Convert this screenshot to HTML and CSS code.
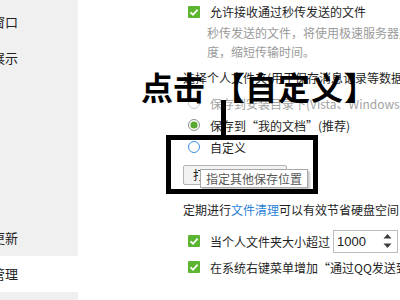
FILE: index.html
```html
<!DOCTYPE html>
<html lang="zh-CN">
<head>
<meta charset="utf-8">
<link rel="stylesheet" href="styles.css">
</head>
<body>
<div class="app">
  <nav class="sidebar">
    <div class="nav-item">会话窗口</div>
    <div class="nav-item">信息展示</div>
    <div class="nav-item">上线</div>
    <div class="nav-item">热键</div>
    <div class="nav-item">声音</div>
    <div class="nav-item">提醒</div>
    <div class="nav-item">软件更新</div>
    <div class="nav-item active">文件管理</div>
    <div class="nav-item">音视频通话</div>
  </nav>
  <main class="main">
    <div class="opt row-first">
      <svg class="check" width="12" height="12" viewBox="0 0 12 12"><rect width="12" height="12" rx="1" fill="#5cb531"/><path d="M2.5 6.3 L5 8.7 L9.6 3.6" fill="none" stroke="#fff" stroke-width="1.7"/></svg>
      <span>允许接收通过秒传发送的文件</span>
    </div>
    <div class="desc">
      <span>秒传发送的文件，将使用极速服务器加速上传，提高传输速</span>
      <span>度，缩短传输时间。</span>
    </div>
    <div class="heading">选择个人文件夹(用于保存消息记录等数据)</div>
    <div class="radios">
      <div class="opt disabled">
        <svg class="radio" width="12" height="12" viewBox="0 0 12 12"><circle cx="6" cy="6" r="5.5" fill="#fff" stroke="#c8c8c8"/></svg>
        <span>保存到安装目录下(Vista、Windows 7下保存到软件目录)</span>
      </div>
      <div class="opt">
        <svg class="radio" width="12" height="12" viewBox="0 0 12 12"><circle cx="6" cy="6" r="5.5" fill="#fff" stroke="#8f8f8f"/><circle cx="6" cy="6" r="3.6" fill="#5aa832"/></svg>
        <span>保存到“我的文档”(推荐)</span>
      </div>
      <div class="opt">
        <svg class="radio" width="12" height="12" viewBox="0 0 12 12"><circle cx="6" cy="6" r="5.5" fill="#fff" stroke="#3b8de0"/></svg>
        <span>自定义</span>
      </div>
    </div>
    <div class="btn-wrap">
      <button class="btn">打开个人文件夹</button>
      <div class="tooltip">指定其他保存位置</div>
    </div>
    <div class="note">定期进行<span class="link">文件清理</span>可以有效节省硬盘空间，提高运行速度。</div>
    <div class="checks">
      <div class="opt check-row">
        <svg class="check" width="12" height="12" viewBox="0 0 12 12"><rect width="12" height="12" rx="1" fill="#5cb531"/><path d="M2.5 6.3 L5 8.7 L9.6 3.6" fill="none" stroke="#fff" stroke-width="1.7"/></svg>
        <span class="label-group">
          <span>当个人文件夹大小超过</span>
          <span class="spin">
            <span class="spin-value">1000</span>
            <svg class="spin-arrows" width="9" height="16" viewBox="0 0 9 16"><polygon points="0.5,5.5 4.5,1 8.5,5.5" fill="#3c3c3c"/><polygon points="0.5,10.5 4.5,15 8.5,10.5" fill="#3c3c3c"/></svg>
          </span>
        </span>
      </div>
      <div class="opt check-row">
        <svg class="check" width="12" height="12" viewBox="0 0 12 12"><rect width="12" height="12" rx="1" fill="#5cb531"/><path d="M2.5 6.3 L5 8.7 L9.6 3.6" fill="none" stroke="#fff" stroke-width="1.7"/></svg>
        <span>在系统右键菜单增加“通过QQ发送到我的手机”</span>
      </div>
    </div>
  </main>
  <div class="annot-title">点击<span class="br-open">【</span><span class="annot-word">自定义</span>】</div>
  <div class="annot-line"></div>
  <div class="annot-box"></div>
</div>
</body>
</html>
```
FILE: styles.css
```css
* { box-sizing: border-box; }
html, body { margin: 0; padding: 0; }
body {
  width: 400px;
  height: 300px;
  overflow: hidden;
  background: #fff;
  font-family: "Noto Sans CJK SC", "Microsoft YaHei", sans-serif;
  font-size: 12px;
  color: #1f1f1f;
}
.app {
  position: relative;
  display: flex;
  width: 400px;
  height: 300px;
}
.sidebar {
  width: 78px;
  flex: none;
  background: #f0f0f0;
  padding-top: 4px;
  overflow: hidden;
}
.nav-item {
  height: 36px;
  line-height: 36px;
  font-size: 13px;
  margin-left: -34px;
  white-space: nowrap;
  color: #222;
}
.nav-item.active { background: #fff; }
.main {
  flex: 1;
  min-width: 0;
  padding-left: 105px;
  overflow: hidden;
  white-space: nowrap;
}
.opt {
  display: flex;
  align-items: center;
  gap: 10px;
  padding-left: 5px;
  height: 22px;
}
.opt svg { flex: none; }
.row-first { height: 23px; }
.disabled { color: #a3a3a3; }
.desc {
  padding-left: 24px;
  color: #9a9a9a;
  line-height: 19px;
}
.desc span { display: block; }
.heading {
  margin-top: 7px;
  line-height: 20px;
}
.radios { margin-top: 4px; }
.btn-wrap {
  position: relative;
  margin-top: 7px;
  height: 20px;
}
.btn {
  display: block;
  width: 104px;
  height: 20px;
  padding: 0;
  border: 1px solid #b4b4b4;
  border-radius: 2px;
  background: #f2f2f2;
  font-family: inherit;
  font-size: 12px;
  color: #1f1f1f;
  text-align: center;
  line-height: 18px;
}
.tooltip {
  position: absolute;
  left: 17px;
  top: 4px;
  width: 108px;
  height: 19px;
  padding: 0 5px;
  background: #fff;
  border: 1px solid #a8a8a8;
  color: #575757;
  line-height: 17px;
  box-shadow: 2px 2px 2px rgba(0, 0, 0, 0.22);
}
.note {
  margin-top: 15px;
  line-height: 20px;
}
.link { color: #2b7fd8; }
.checks {
  margin-top: 9px;
  display: flex;
  flex-direction: column;
  gap: 2px;
}
.check-row { height: 24px; }
.label-group {
  display: flex;
  align-items: center;
  gap: 3px;
}
.spin {
  display: flex;
  align-items: center;
  justify-content: space-between;
  width: 65px;
  height: 23px;
  border: 1px solid #bdbdbd;
  padding: 0 5px 0 3px;
  font-family: "Liberation Sans", sans-serif;
  font-size: 13px;
  color: #1a1a1a;
}
.annot-title {
  position: absolute;
  left: 141px;
  top: 70px;
  font-size: 32px;
  line-height: 32px;
  font-weight: bold;
  color: #000;
  white-space: nowrap;
  text-spacing-trim: space-all;
}
.br-open { margin-left: 8px; }
.annot-word { letter-spacing: 1px; }
.annot-line {
  position: absolute;
  left: 221px;
  top: 100px;
  width: 5px;
  height: 36px;
  background: #000;
}
.annot-box {
  position: absolute;
  left: 166px;
  top: 135px;
  width: 152px;
  height: 59px;
  border: 5px solid #000;
}
```
